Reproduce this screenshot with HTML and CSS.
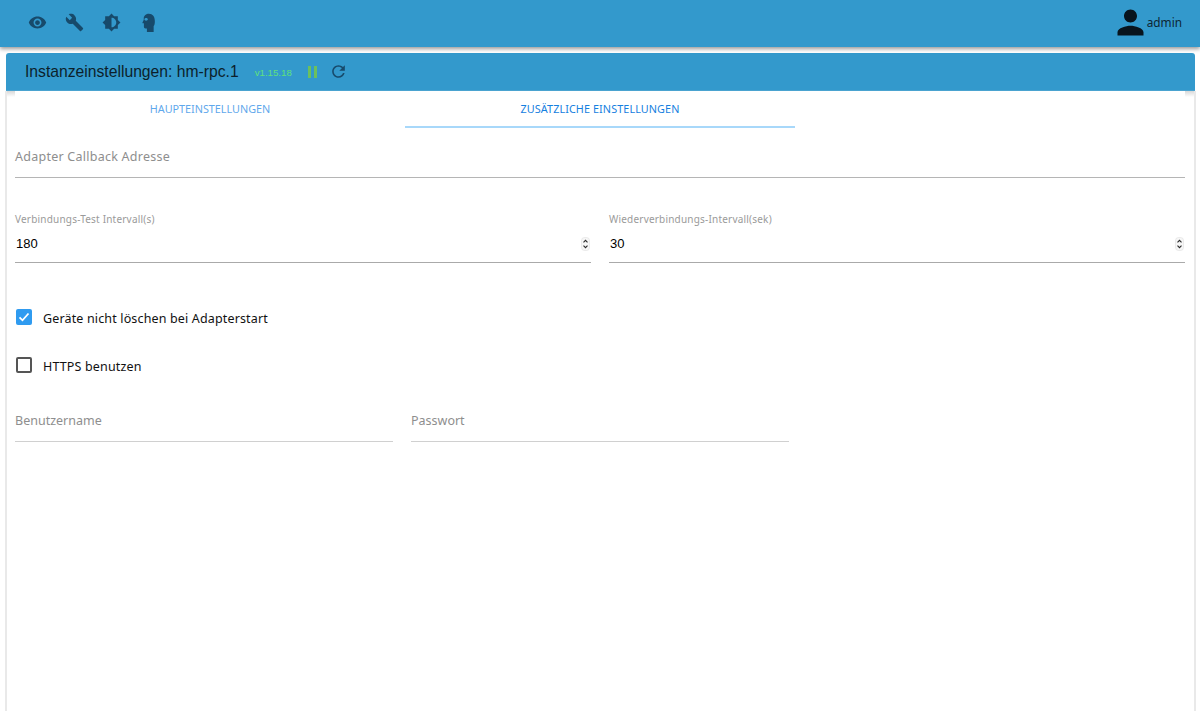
FILE: index.html
```html
<!DOCTYPE html>
<html lang="de">
<head>
<meta charset="utf-8">
<title>Instanzeinstellungen</title>
<link rel="stylesheet" href="styles.css">
</head>
<body>
<header class="topbar">
  <nav class="tools">
    <svg class="tool" viewBox="0 0 24 24"><path d="M12 4.5C7 4.5 2.73 7.61 1 12c1.73 4.39 6 7.5 11 7.5s9.27-3.11 11-7.5c-1.73-4.39-6-7.5-11-7.5zM12 17c-2.76 0-5-2.24-5-5s2.24-5 5-5 5 2.24 5 5-2.24 5-5 5zm0-8c-1.66 0-3 1.34-3 3s1.34 3 3 3 3-1.34 3-3-1.34-3-3-3z"/></svg>
    <svg class="tool" viewBox="0 0 24 24"><path d="M22.7 19l-9.1-9.1c.9-2.3.4-5-1.5-6.9-2-2-5-2.4-7.4-1.3L9 6 6 9 1.6 4.7C.4 7.1.9 10.1 2.9 12.1c1.9 1.9 4.6 2.4 6.9 1.5l9.1 9.1c.4.4 1 .4 1.4 0l2.3-2.3c.5-.4.5-1.1.1-1.4z"/></svg>
    <svg class="tool" viewBox="0 0 24 24"><path d="M20 15.31L23.31 12 20 8.69V4h-4.69L12 .69 8.69 4H4v4.69L.69 12 4 15.31V20h4.69L12 23.31 15.31 20H20v-4.69zM12 18V6c3.31 0 6 2.69 6 6s-2.69 6-6 6z"/></svg>
    <svg class="tool" viewBox="0 0 24 24"><path fill-rule="evenodd" d="M12.500.8C9 .8 6 3 6 6.600c0 1 .1 2-.4 2.800L4.400 12c-.2.5 0 1 .7 1H6.200v4.500c0 1.300.9 2 2 2H10V24h8.500v-7.500c1.300-1.300 1.500-3.500 1.500-6.500 0-5.500-2.700-9.200-7.500-9.200zM9 6.300C7.700 6.300 6.800 7 6.800 8S7.700 9.700 9 9.700 11.200 9 11.200 8 10.300 6.300 9 6.300z"/></svg>
  </nav>
  <div class="user">
    <svg class="user-icon" viewBox="0 0 24 24"><path d="M12 12c2.21 0 4-1.790 4-4s-1.790-4-4-4-4 1.790-4 4 1.790 4 4 4zm0 2c-2.670 0-8 1.340-8 4v2h16v-2c0-2.660-5.330-4-8-4z"/></svg>
    <span class="user-name">admin</span>
  </div>
</header>
<main class="panel">
  <div class="panel-head">
    <h1 class="panel-title">Instanzeinstellungen: hm-rpc.1</h1>
    <span class="version">v1.15.18</span>
    <span class="pause"><i></i><i></i></span>
    <svg class="reload" viewBox="0 0 24 24"><path d="M17.650 6.350C16.200 4.900 14.210 4 12 4c-4.420 0-7.990 3.580-7.990 8s3.570 8 7.990 8c3.730 0 6.840-2.550 7.730-6h-2.080c-.82 2.330-3.040 4-5.650 4-3.310 0-6-2.690-6-6s2.690-6 6-6c1.660 0 3.140.69 4.220 1.780L13 11h7V4l-2.350 2.350z"/></svg>
  </div>
  <div class="panel-body">
    <div class="tabs">
      <div class="tab">Haupteinstellungen</div>
      <div class="tab tab-active">Zusätzliche Einstellungen</div>
    </div>
    <div class="field field-empty field-full"><span class="placeholder">Adapter Callback Adresse</span></div>
    <div class="row-two">
      <div class="field field-number">
        <label class="float-label">Verbindungs-Test Intervall(s)</label>
        <div class="value-line"><span class="value">180</span>
          <svg class="spin" viewBox="0 0 9 14"><rect x=".5" y=".5" width="8" height="13" rx="3"/><path d="M2.500 5.400l2-2 2 2M2.500 8.600l2 2 2-2"/></svg>
        </div>
      </div>
      <div class="field field-number">
        <label class="float-label">Wiederverbindungs-Intervall(sek)</label>
        <div class="value-line"><span class="value">30</span>
          <svg class="spin" viewBox="0 0 9 14"><rect x=".5" y=".5" width="8" height="13" rx="3"/><path d="M2.500 5.400l2-2 2 2M2.500 8.600l2 2 2-2"/></svg>
        </div>
      </div>
    </div>
    <div class="check check-first">
      <span class="box box-on"><svg viewBox="0 0 16 16"><path d="M3.500 8.300l3 3 6-6.800"/></svg></span>
      <span class="check-label">Geräte nicht löschen bei Adapterstart</span>
    </div>
    <div class="check">
      <span class="box"></span>
      <span class="check-label">HTTPS benutzen</span>
    </div>
    <div class="row-login">
      <div class="field field-empty field-light"><span class="placeholder">Benutzername</span></div>
      <div class="field field-empty field-light"><span class="placeholder">Passwort</span></div>
    </div>
  </div>
</main>
</body>
</html>
```
FILE: styles.css
```css
* { box-sizing: border-box; }
html, body { margin: 0; height: 711px; overflow: hidden; background: #fff; }
body { font-family: "Noto Sans", "Open Sans", sans-serif; color: #000; display: flex; flex-direction: column; }

.topbar {
  height: 47px;
  flex: none;
  background: #3399cc;
  box-shadow: 0 2px 4px rgba(0,0,0,.4);
  display: flex;
  align-items: center;
  justify-content: space-between;
  padding: 0 18px 3px 28px;
  position: relative;
}
.tools { display: flex; gap: 18px; }
.tool { width: 19px; height: 19px; fill: #174a6b; display: block; }
.user { display: flex; align-items: center; }
.user-icon { width: 39px; height: 39px; fill: #08141d; display: block; margin-right: -3px; }
.user-name { font-size: 11.800px; color: #0d2533; }

.panel { flex: 1; margin: 6px 5px 0 6px; display: flex; flex-direction: column; min-height: 0; }
.panel-head {
  height: 38px;
  flex: none;
  background: #3399cc;
  border-radius: 3px 3px 0 0;
  border-bottom: 1px solid #4aa3d0;
  display: flex;
  align-items: center;
  padding: 0 0 0 19px;
}
.panel-title { margin: 0; font: 400 15.700px "Liberation Sans", Arial, sans-serif; color: #0c1f2b; }
.version { font: 400 9.700px "Liberation Sans", Arial, sans-serif; color: #5fe07c; margin-left: 16px; padding-top: 2px; }
.pause { display: flex; gap: 2.500px; margin-left: 16px; }
.pause i { width: 3.500px; height: 12px; background: #6cc05c; display: block; }
.reload { width: 19px; height: 19px; fill: #174a6b; margin-left: 12px; display: block; }

.panel-body {
  flex: 1;
  margin: 0 -1px;
  border-left: 2px solid #e9e9e9;
  border-right: 2px solid #e9e9e9;
  padding: 0 9px 0 8px;
  background: #fff;
  position: relative;
}
.panel-body::before, .panel-body::after {
  content: "";
  position: absolute;
  top: 0;
  height: 6px;
  background: linear-gradient(#d8d8d8, #fff);
}
.panel-body::before { left: 0; width: 8px; }
.panel-body::after { right: 0; width: 9px; }

.tabs { display: flex; height: 37px; }
.tab {
  width: 390px;
  text-align: center;
  font-size: 10.800px;
  line-height: 36px;
  text-transform: uppercase;
  color: #5fa8ec;
}
.tab-active { color: #1580e0; border-bottom: 2px solid #a8d8fa; letter-spacing: .1px; }

.field-full { margin-top: 19px; height: 31px; }
.field-empty { border-bottom: 1px solid #b5b5b5; }
.field-light { border-bottom-color: #d0d0d0; width: 378px; height: 31px; }
.placeholder { font-size: 12.500px; color: #8e8e8e; letter-spacing: .25px; display: block; line-height: 20px; }
.field-light .placeholder { letter-spacing: 0; }

.row-two { display: flex; gap: 18px; margin-top: 34px; }
.field-number { flex: 1; height: 51px; border-bottom: 1px solid #aaa; }
.float-label { display: block; font-size: 10px; color: #9a9a9a; line-height: 14px; letter-spacing: .2px; }
.value-line { display: flex; align-items: center; justify-content: space-between; margin-top: 7px; height: 20px; padding: 0 1px; }
.value { font: 400 13px "Liberation Sans", Arial, sans-serif; }
.spin { width: 9px; height: 14px; display: block; margin-top: 2px; }
.spin rect { fill: #f6f6f6; stroke: #e4e4e4; stroke-width: .7; }
.spin path { fill: none; stroke: #2a2a2a; stroke-width: 1.100; }

.check { display: flex; align-items: center; gap: 11px; height: 16px; margin-top: 32px; padding-left: 1px; }
.check-first { margin-top: 46px; }
.box { width: 16px; height: 16px; border: 2px solid #555; border-radius: 2px; display: block; flex: none; background: #fff; }
.box-on { background: #2f9bf0; border: 0; }
.box-on svg { display: block; width: 16px; height: 16px; }
.box-on path { fill: none; stroke: #fff; stroke-width: 1.800; }
.check-label { font-size: 12.500px; letter-spacing: .15px; color: #111; padding-top: 2px; }

.row-login { display: flex; gap: 18px; margin-top: 38px; }
```
